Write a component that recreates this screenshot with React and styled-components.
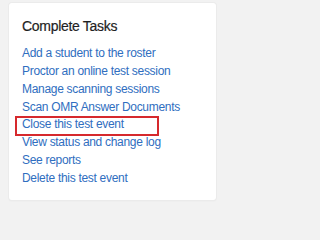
import React from "react";
import styled, { createGlobalStyle } from "styled-components";

const GlobalStyle = createGlobalStyle`
  html, body {
    margin: 0;
    padding: 0;
    background: #f2f2f2;
  }
  body {
    font-family: "Liberation Sans", Arial, sans-serif;
    letter-spacing: -0.3px;
  }
`;

const tasks = [
  { label: "Add a student to the roster" },
  { label: "Proctor an online test session" },
  { label: "Manage scanning sessions" },
  { label: "Scan OMR Answer Documents" },
  { label: "Close this test event", highlighted: true },
  { label: "View status and change log" },
  { label: "See reports" },
  { label: "Delete this test event" },
];

export default function App() {
  return (
    <>
      <GlobalStyle />
      <Page>
        <Card>
          <Title>Complete Tasks</Title>
          <TaskList>
            {tasks.map((task) => (
              <TaskItem key={task.label} $highlighted={task.highlighted}>
                <TaskLink href="#">{task.label}</TaskLink>
              </TaskItem>
            ))}
          </TaskList>
        </Card>
      </Page>
    </>
  );
}

const Page = styled.div`
  padding: 3px 7px 10px 9px;
  width: 223px;
  height: 210px;
  box-sizing: border-box;
`;

const Card = styled.section`
  box-sizing: border-box;
  width: 207px;
  height: 197px;
  background: #ffffff;
  border-radius: 3px;
  box-shadow: 0 0 0 1px #ebebeb, 0 1px 2px rgba(0, 0, 0, 0.06);
  padding: 15px 13px 0 13px;
`;

const Title = styled.h2`
  margin: 0 0 10px 0;
  font-size: 14px;
  line-height: 17px;
  font-weight: 400;
  color: #1f1f1f;
  -webkit-text-stroke: 0.2px #1f1f1f;
`;

const TaskList = styled.ul`
  list-style: none;
  margin: 0;
  padding: 0;
`;

const TaskItem = styled.li`
  position: relative;
  font-size: 12px;
  line-height: 17.86px;

  &::after {
    content: "";
    display: ${(p) => (p.$highlighted ? "block" : "none")};
    position: absolute;
    top: 0;
    left: -7px;
    width: 144px;
    height: 20px;
    box-sizing: border-box;
    border: 2px solid #d6292d;
    pointer-events: none;
  }
`;

const TaskLink = styled.a`
  color: #2f6ec0;
  text-decoration: none;
`;
